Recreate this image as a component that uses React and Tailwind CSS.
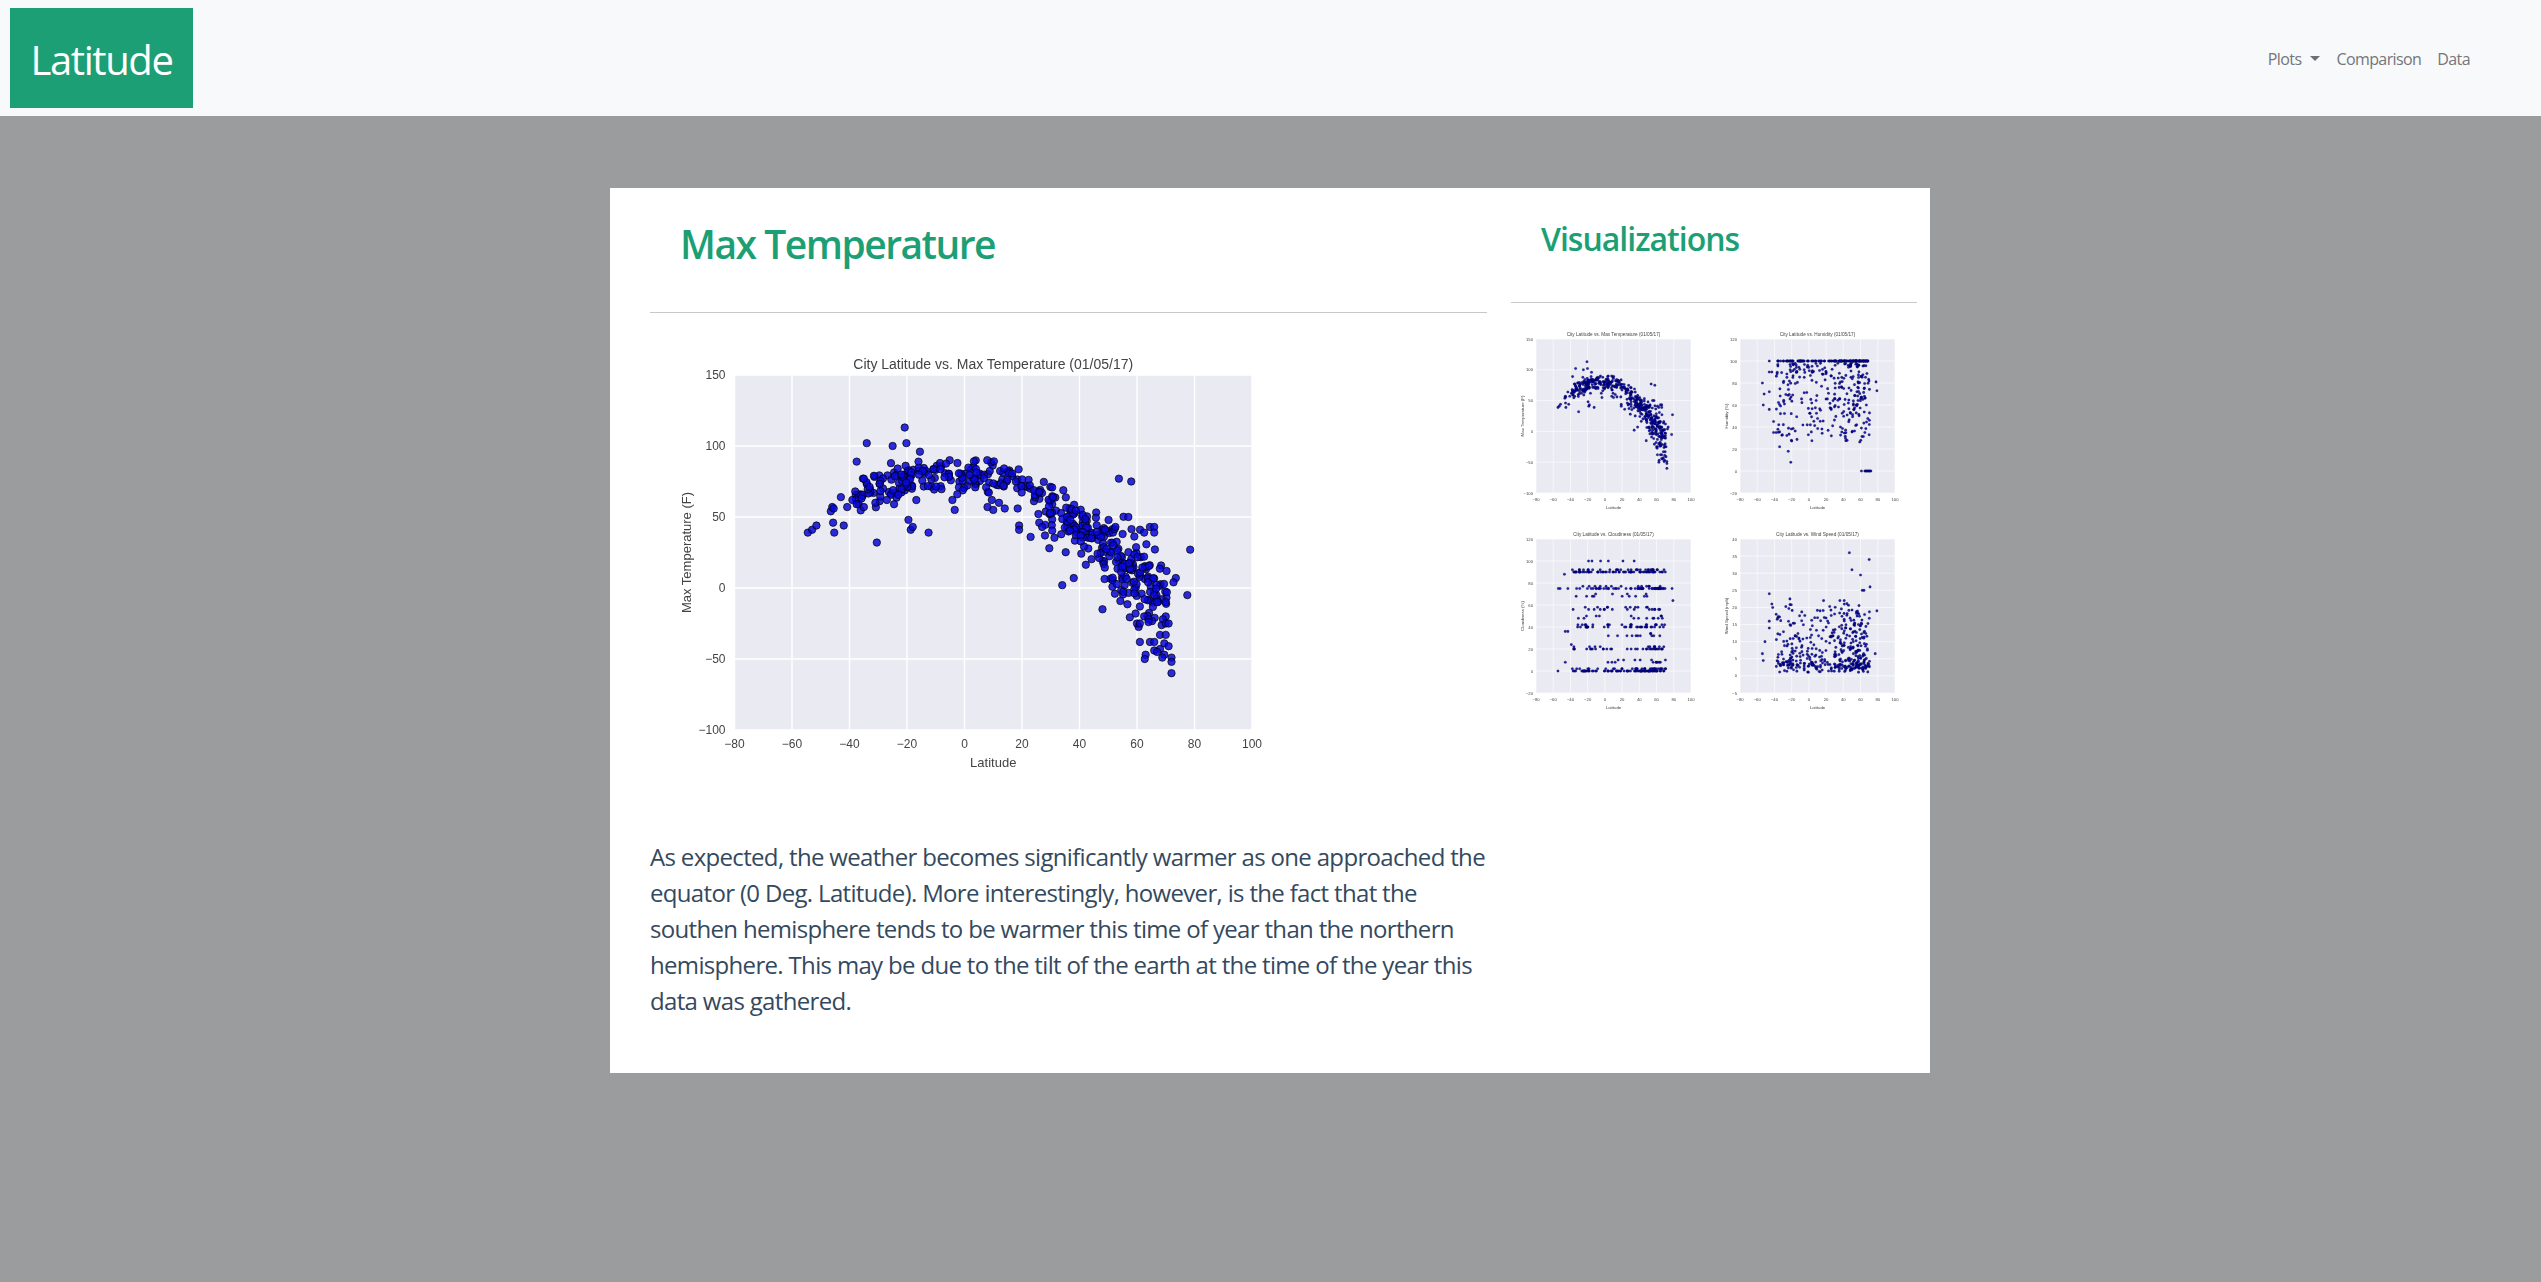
import React from 'react'

// small seeded random so the scatter looks the same on every load
function mulberry(seed) {
    return () => {
        seed = (seed + 0x6d2b79f5) | 0
        let t = Math.imul(seed ^ (seed >>> 15), 1 | seed)
        t = (t + Math.imul(t ^ (t >>> 7), 61 | t)) ^ t
        return ((t ^ (t >>> 14)) >>> 0) / 4294967296
    }
}

const rand = mulberry(1701)
const pick = (list) => list[Math.floor(rand() * list.length)]
const gauss = () => (rand() + rand() + rand() - 1.5) / 0.87

const curve = [[-50, 48], [-40, 63], [-30, 72], [-20, 78], [-10, 78], [0, 79], [10, 79], [20, 74], [30, 56], [40, 41], [50, 25], [60, 10], [70, -6], [75, -8]]
const tempAt = (lat) => {
    for (let i = 0; i < curve.length - 1; i++) {
        const [a, ta] = curve[i]
        const [b, tb] = curve[i + 1]
        if (lat <= b) return ta + ((lat - a) / (b - a)) * (tb - ta)
    }
    return -8
}

const cities = Array.from({ length: 430 }, () => {
    const r = rand()
    let lat
    if (r < 0.1) lat = -38 + rand() * 20
    else if (r < 0.26) lat = -26 + rand() * 26
    else if (r < 0.42) lat = rand() * 28
    else if (r < 0.68) lat = 28 + rand() * 22
    else lat = 50 + rand() * 21
    return { lat, spread: lat > 50 ? 26 : lat > 28 ? 17 : 11 }
})

const lateTemp = [[-54.5, 39], [-53, 41], [-51.5, 44], [-46.5, 54], [-46, 57], [-45.5, 56], [-45.7, 46], [-45.3, 39], [-43, 64], [-42, 44], [-40.8, 57], [-39, 62], [-38, 68], [-37.5, 89], [-37.5, 59], [-34, 102], [-35, 77], [-35, 57], [-31.5, 79], [-30.5, 32], [-31, 60], [-25, 100], [-20.8, 113], [-20.2, 102], [-15.5, 96], [-16, 89], [-19.5, 48], [-18.7, 41], [-18, 43], [-12.5, 39], [-24.5, 59], [-27, 62], [-3.4, 55], [-4.2, 62], [-2.5, 66], [8, 57], [10, 55], [9.5, 62], [12, 60], [14, 56], [19, 44], [19, 41], [18.5, 56], [23, 36], [26, 46], [27, 43], [28, 37], [29.5, 28], [34, 2], [38, 7], [53.7, 77], [58, 75], [57, 50], [52.5, 43], [55, 38], [64.5, 43], [66, 43], [66, 39], [62.5, 39], [78.5, 27], [77.5, -5], [73.5, 7], [72.7, 4], [48, -15], [60, -25], [61, -25], [59.5, -18], [62.5, -20], [64, -22], [64, -24], [61, -38], [64.5, -38], [66, -38], [68, -33], [70, -33], [69.5, -39], [71, -41], [68, -43], [66, -44], [67, -45], [69.5, -47], [68.8, -49], [63, -47], [62.7, -50], [72, -49], [72, -52], [72, -60], [70, -20], [69, -22], [70, -25], [71, -25], [70, -10], [67, -10], [66, -5], [61, -13]]

const tempData = [...cities.map((c) => [c.lat, Math.min(90, tempAt(c.lat) + gauss() * c.spread)]), ...lateTemp]

const humidityData = [
    ...cities.map((c) => {
        if (rand() < 0.3) return [c.lat, 100]
        return [c.lat, Math.min(100, 98 - Math.pow(rand(), 1.4) * 72)]
    }),
    [-54, 80], [-53, 60], [-52, 70], [-46, 100], [-46, 90], [-46, 72], [-46, 56], [-43, 90], [-41, 45], [-41, 35], [-38, 35], [-36, 38], [-35, 42], [-34, 22], [-24, 18], [-21, 8],
    [61, 0], [65, 0], [66, 0], [67, 0], [68, 0], [69, 0], [70, 0], [71, 0], [72, 0], [79, 73], [78, 81], [61, 39], [65, 35], [70, 33],
]

const cloudLevels = [0, 0, 0, 0, 0, 0, 8, 20, 20, 32, 40, 40, 48, 56, 68, 75, 75, 75, 90, 90, 90, 90]
const cloudData = [
    ...cities.map((c) => [c.lat, pick(cloudLevels) + (rand() < 0.3 ? 2 : 0)]),
    [-54, 75], [-52, 75], [-54.5, 0], [-47, 88], [-46, 36], [-46, 8], [-43, 36], [-43, 75], [-39, 24], [-19, 100], [-15, 100], [-5, 100], [4, 100], [21, 100], [34, 100], [79, 64], [78, 75],
]

const windData = [
    ...cities.map((c) => [c.lat, 1 + Math.pow(rand(), 2.2) * 18 + rand() * 2.5]),
    [-54, 6.5], [-53, 4.5], [-51, 10], [-46, 24], [-46, 16], [-46, 14], [-43, 21], [-42, 20], [-38, 18], [-22, 22.5], [13, 19], [17, 22], [36, 22], [41, 22], [47, 36], [50, 31], [60, 29.5], [62, 25], [64, 25], [70, 34], [71, 26], [79, 19], [77, 6.5],
]

const MAIN = { width: 640, height: 450, left: 84.5, top: 31, plotW: 517.5, plotH: 355, font: 12, labelFont: 13, tickX: 14, tickY: 9, labelX: 32, labelY: 48, titleY: 11, titleFont: 14, dot: 3.7, grid: 1.4, fill: '#0808d8', edge: 0.7 }
const THUMB = { width: 195, height: 200, left: 16, top: 14, plotW: 155, plotH: 154, font: 4.2, labelFont: 4.4, tickX: 6, tickY: 3, labelX: 14, labelY: 14, titleY: 5, titleFont: 4.7, dot: 1.3, grid: 0.6, fill: '#000099', edge: 0.15 }

function range(from, to, step) {
    const out = []
    for (let v = from; v <= to; v += step) out.push(v)
    return out
}

function Scatter({ size, title, yLabel, yTicks, data }) {
    const xMin = -80
    const xMax = 100
    const yMin = yTicks[0]
    const yMax = yTicks[yTicks.length - 1]
    const sx = (v) => size.left + ((v - xMin) / (xMax - xMin)) * size.plotW
    const sy = (v) => size.top + size.plotH - ((v - yMin) / (yMax - yMin)) * size.plotH
    const midX = size.left + size.plotW / 2
    const midY = size.top + size.plotH / 2
    const bottom = size.top + size.plotH

    return (
        <svg width={size.width} height={size.height} className="block blur-[0.4px]" fontFamily="'Liberation Sans', Arial, sans-serif" fill="#444444">
            <rect x={size.left} y={size.top} width={size.plotW} height={size.plotH} fill="#eaeaf2" />
            {range(-80, 100, 20).map((v) => (
                <g key={v}>
                    <line x1={sx(v)} x2={sx(v)} y1={size.top} y2={bottom} stroke="#fff" strokeWidth={size.grid} />
                    <text x={sx(v)} y={bottom + size.tickX} fontSize={size.font} textAnchor="middle" dominantBaseline="central">{String(v).replace('-', '−')}</text>
                </g>
            ))}
            {yTicks.map((v) => (
                <g key={v}>
                    <line x1={size.left} x2={size.left + size.plotW} y1={sy(v)} y2={sy(v)} stroke="#fff" strokeWidth={size.grid} />
                    <text x={size.left - size.tickY} y={sy(v)} fontSize={size.font} textAnchor="end" dominantBaseline="central">{String(v).replace('-', '−')}</text>
                </g>
            ))}
            {data.map(([x, y], i) => (
                <circle key={i} cx={sx(x)} cy={sy(y)} r={size.dot} fill={size.fill} fillOpacity="0.85" stroke="#000" strokeWidth={size.edge} />
            ))}
            <text x={midX} y={size.top - size.titleY} fontSize={size.titleFont} textAnchor="middle" dominantBaseline="central">{title}</text>
            <text x={midX} y={bottom + size.labelX} fontSize={size.labelFont} textAnchor="middle" dominantBaseline="central">Latitude</text>
            <text transform={`translate(${size.left - size.labelY} ${midY}) rotate(-90)`} fontSize={size.labelFont} textAnchor="middle" dominantBaseline="central">{yLabel}</text>
        </svg>
    )
}

const thumbs = [
    { title: 'City Latitude vs. Max Temperature (01/05/17)', yLabel: 'Max Temperature (F)', yTicks: range(-100, 150, 50), data: tempData },
    { title: 'City Latitude vs. Humidity (01/05/17)', yLabel: 'Humidity (%)', yTicks: range(-20, 120, 20), data: humidityData },
    { title: 'City Latitude vs. Cloudiness (01/05/17)', yLabel: 'Cloudiness (%)', yTicks: range(-20, 120, 20), data: cloudData },
    { title: 'City Latitude vs. Wind Speed (01/05/17)', yLabel: 'Wind Speed (mph)', yTicks: range(-5, 40, 5), data: windData },
]

function Navbar() {
    return (
        <nav className="h-[116px] bg-[#f8f9fa] flex items-center justify-between pl-[10px] pr-[71px]">
            <div className="w-[183px] h-[100px] pt-[3px] bg-[#1c9f74] text-white text-[40px] flex items-center justify-center tracking-[-1.4px]">Latitude</div>
            <div className="flex items-center pt-[1px] text-base text-[#74767a] tracking-[-0.6px]">
                <span>Plots</span>
                <span className="ml-[9px] w-0 h-0 border-x-[5px] border-x-transparent border-t-[5px] border-t-[#6d6f72]" />
                <span className="ml-[16px]">Comparison</span>
                <span className="ml-[16px]">Data</span>
            </div>
        </nav>
    )
}

export default function App() {
    return (
        <div className="min-h-screen bg-[#9b9c9e] font-['Open_Sans',sans-serif]">
            <Navbar />
            <main className="w-[1320px] h-[885px] mt-[72px] ml-[610px] bg-white flex pl-[40px]">
                <section className="w-[837px]">
                    <div className="h-[125px] pt-[32px] border-b border-[#c8c8c8]">
                        <h1 className="pl-[30px] text-[39px] leading-[48px] font-semibold text-[#1c9f74] tracking-[-1.5px]">Max Temperature</h1>
                    </div>
                    <div className="mt-[31px]">
                        <Scatter size={MAIN} title="City Latitude vs. Max Temperature (01/05/17)" yLabel="Max Temperature (F)" yTicks={range(-100, 150, 50)} data={tempData} />
                    </div>
                    <p className="mt-[45px] text-2xl leading-9 text-[#34495e] tracking-[-0.67px]">
                        As expected, the weather becomes significantly warmer as one approached the equator (0 Deg. Latitude). More interestingly, however, is the fact that the southen hemisphere tends to be warmer this time of year than the northern hemisphere. This may be due to the tilt of the earth at the time of the year this data was gathered.
                    </p>
                </section>
                <aside className="w-[406px] ml-[24px]">
                    <div className="h-[115px] pt-[32px] border-b border-[#c8c8c8]">
                        <h2 className="pl-[30px] text-[32px] leading-[38px] font-semibold text-[#1c9f74] tracking-[-1px]">Visualizations</h2>
                    </div>
                    <div className="mt-[22px] pl-[9px] grid grid-cols-[195px_195px] gap-x-[9px]">
                        {thumbs.map((t) => (
                            <Scatter key={t.title} size={THUMB} {...t} />
                        ))}
                    </div>
                </aside>
            </main>
        </div>
    )
}
